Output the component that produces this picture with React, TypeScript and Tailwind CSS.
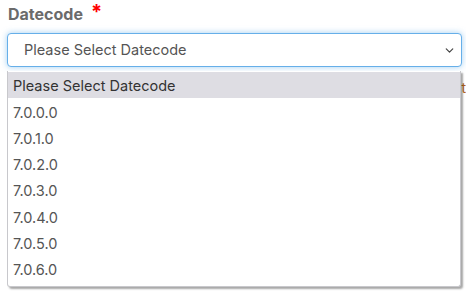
import { ChevronDown } from "lucide-react";

const options = [
  "Please Select Datecode",
  "7.0.0.0",
  "7.0.1.0",
  "7.0.2.0",
  "7.0.3.0",
  "7.0.4.0",
  "7.0.5.0",
  "7.0.6.0",
];

export default function App() {
  return (
    <div className="relative h-[292px] w-[466px] overflow-hidden bg-white pl-[7px] pr-[4px] pt-[3px] font-['Inter','Liberation_Sans',sans-serif]">
      <label className="flex items-start gap-[8px] pl-[1px] text-[16px] font-bold leading-[22px] text-[#6b6b6b]">
        Datecode
        <span className="text-[20px] leading-[18px] text-[#ff0000]">*</span>
      </label>

      <div className="mt-[8px] flex h-[34px] items-center justify-between rounded-[4px] border border-[#66afe9] bg-white pl-[16px] pr-[5px] shadow-[0_0_6px_rgba(102,175,233,0.6)]">
        <span className="text-[14.5px] text-[#555]">Please Select Datecode</span>
        <ChevronDown className="size-[13px] text-[#444]" strokeWidth={2.25} />
      </div>

      {/* field underneath the open list */}
      <div className="-mr-[4px] mt-[11px] text-right text-[14px] leading-[20px] text-[#b5651d]">Select</div>

      <ul className="absolute left-[7px] top-[71px] w-[454px] rounded-b-[3px] border border-t-0 border-[#c8c8cc] bg-white pb-[4px] pt-[1px] shadow-[2px_2px_2px_rgba(0,0,0,0.35)]">
        {options.map((opt, idx) => (
          <li
            key={opt}
            className={`flex h-[26.3px] items-center pl-[5px] pt-[2px] text-[14.5px] ${
              idx === 0 ? "bg-[#dedde3] text-[#333]" : "text-[#555]"
            }`}
          >
            {opt}
          </li>
        ))}
      </ul>
    </div>
  );
}
